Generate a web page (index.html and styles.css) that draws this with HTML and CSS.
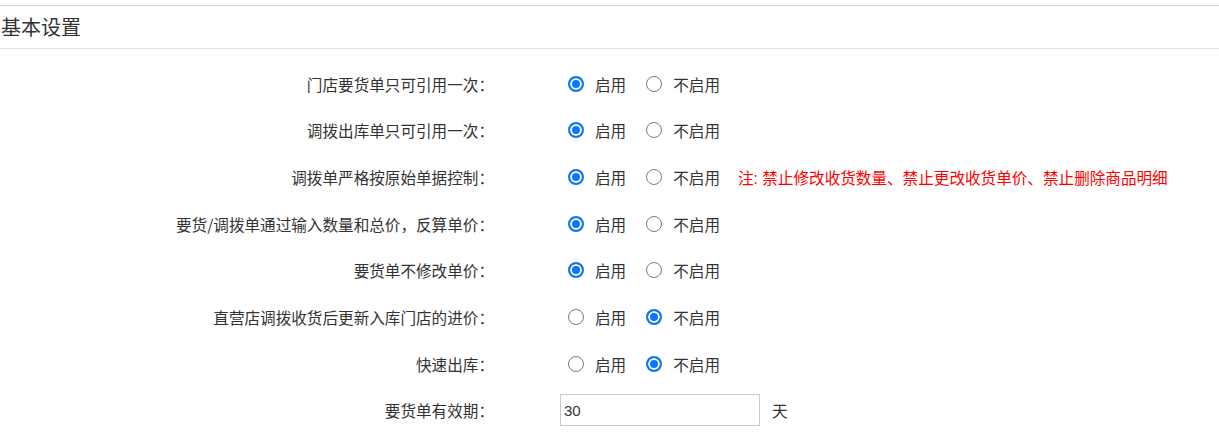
FILE: index.html
```html
<!DOCTYPE html>
<html lang="zh-CN">
<head>
<meta charset="utf-8">
<title>基本设置</title>
<link rel="stylesheet" href="styles.css">
</head>
<body>
<div class="section-header">基本设置</div>
<div class="form">
  <div class="row">
    <div class="label">门店要货单只可引用一次：</div>
    <div class="field">
      <label class="opt"><input type="radio" name="r1" checked><span>启用</span></label>
      <label class="opt"><input type="radio" name="r1"><span>不启用</span></label>
    </div>
  </div>
  <div class="row">
    <div class="label">调拨出库单只可引用一次：</div>
    <div class="field">
      <label class="opt"><input type="radio" name="r2" checked><span>启用</span></label>
      <label class="opt"><input type="radio" name="r2"><span>不启用</span></label>
    </div>
  </div>
  <div class="row">
    <div class="label">调拨单严格按原始单据控制：</div>
    <div class="field">
      <label class="opt"><input type="radio" name="r3" checked><span>启用</span></label>
      <label class="opt"><input type="radio" name="r3"><span>不启用</span></label>
      <span class="note">注: 禁止修改收货数量、禁止更改收货单价、禁止删除商品明细</span>
    </div>
  </div>
  <div class="row">
    <div class="label">要货/调拨单通过输入数量和总价，反算单价：</div>
    <div class="field">
      <label class="opt"><input type="radio" name="r4" checked><span>启用</span></label>
      <label class="opt"><input type="radio" name="r4"><span>不启用</span></label>
    </div>
  </div>
  <div class="row">
    <div class="label">要货单不修改单价：</div>
    <div class="field">
      <label class="opt"><input type="radio" name="r5" checked><span>启用</span></label>
      <label class="opt"><input type="radio" name="r5"><span>不启用</span></label>
    </div>
  </div>
  <div class="row">
    <div class="label">直营店调拨收货后更新入库门店的进价：</div>
    <div class="field">
      <label class="opt"><input type="radio" name="r6"><span>启用</span></label>
      <label class="opt"><input type="radio" name="r6" checked><span>不启用</span></label>
    </div>
  </div>
  <div class="row">
    <div class="label">快速出库：</div>
    <div class="field">
      <label class="opt"><input type="radio" name="r7"><span>启用</span></label>
      <label class="opt"><input type="radio" name="r7" checked><span>不启用</span></label>
    </div>
  </div>
  <div class="row">
    <div class="label">要货单有效期：</div>
    <div class="field">
      <input class="text-input" type="text" value="30">
      <span class="unit">天</span>
    </div>
  </div>
</div>
</body>
</html>
```
FILE: styles.css
```css
html, body {
  margin: 0;
  padding: 0;
  background: #fff;
}
body {
  font-family: "Liberation Sans", "Noto Sans CJK SC", sans-serif;
  font-size: 15.6px;
  color: #333;
}
.section-header {
  margin-top: 5px;
  height: 42px;
  line-height: 42px;
  border-top: 1px solid #d3d3d3;
  border-bottom: 1px solid #e2e2e2;
  padding-left: 1px;
  font-size: 20px;
  font-family: "Noto Sans CJK SC", sans-serif;
  color: #333;
}
.form {
  padding-top: 11.5px;
}
.row {
  display: grid;
  grid-template-columns: 494px 1fr;
  column-gap: 66px;
  align-items: center;
  height: 46.67px;
}
.label {
  text-align: right;
  font-family: "Noto Sans CJK SC", sans-serif;
  white-space: nowrap;
}
.field {
  display: flex;
  align-items: center;
  white-space: nowrap;
  font-family: "Noto Sans CJK SC", sans-serif;
}
.opt {
  display: inline-flex;
  align-items: center;
  margin-right: 12px;
}
.opt input {
  appearance: none;
  -webkit-appearance: none;
  box-sizing: border-box;
  width: 16px;
  height: 16px;
  margin: 0 11px 0 8px;
  border: 1.5px solid #7a7a7a;
  border-radius: 50%;
  background: #fff;
}
.opt input:checked {
  border: 2px solid #0b76fb;
  background: #0b76fb;
  box-shadow: inset 0 0 0 2px #fff;
}
.note {
  margin-left: 6px;
  color: #ff0000;
  font-family: "Liberation Sans", "Noto Sans CJK SC", sans-serif;
}
.text-input {
  box-sizing: border-box;
  width: 200px;
  height: 32px;
  border: 1px solid #c9c9c9;
  padding: 0 3px;
  font-family: "Liberation Sans", sans-serif;
  font-size: 15px;
  color: #333;
  outline: none;
}
.unit {
  margin-left: 12px;
}
```
